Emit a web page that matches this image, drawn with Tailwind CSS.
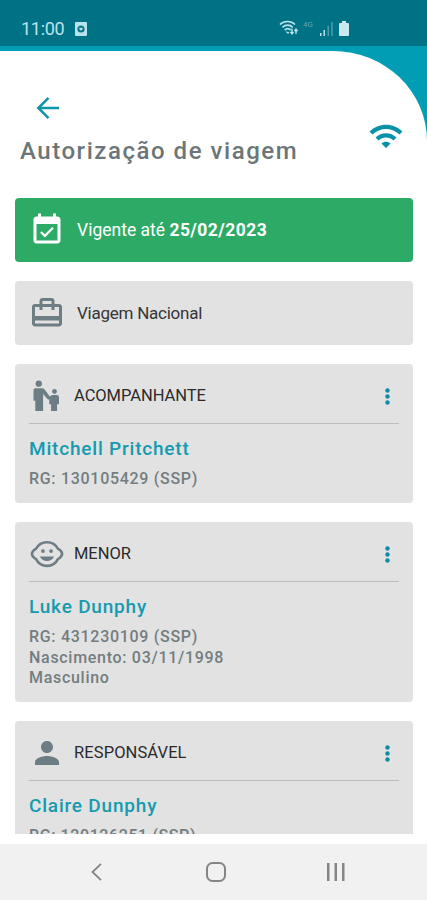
<!DOCTYPE html>
<html lang="pt-BR">
<head>
  <meta charset="UTF-8">
  <meta name="viewport" content="width=device-width, initial-scale=1.0">
  <title>Autorização de viagem</title>
  <script src="https://cdn.jsdelivr.net/npm/@tailwindcss/browser@4"></script>
</head>
<body class="h-[900px] w-[427px] overflow-hidden bg-[#009db5] font-['Roboto',sans-serif] flex flex-col">
  <!-- Status bar -->
  <div class="h-[46px] shrink-0 bg-[#007286] flex items-center pt-[11px] pl-[21px] text-[#b9e3ea]">
    <span class="text-[18px] leading-5 w-[43px] tracking-[-0.3px]">11:00</span>
    <svg class="ml-[11px] w-3 h-[14px]" viewBox="0 0 12 14">
      <rect width="12" height="14" rx="1" fill="#b9e3ea"/>
      <circle cx="6" cy="7" r="3.6" fill="#0c7487"/>
      <path d="M6 8.8L4.3 7V5.8h1.2l.5.5.5-.5h1.2V7z" fill="#b9e3ea"/>
    </svg>
    <svg class="ml-[192px] -mt-[2px] w-[19px] h-[16px]" viewBox="0 0 19 16" fill="none" stroke="#b9e3ea" stroke-width="1.7">
      <path d="M1 4.5c4-4 11-4 15 0M3.5 7.3c3-2.8 7.5-2.8 10.2 0M5.8 10c2-1.7 4-1.7 6 0"/>
      <path d="M6.5 11.500l2.500 2.500 1.500-2z" fill="#b9e3ea" stroke="none"/>
      <path d="M13 8.500v5M11.500 12l1.500 2 1.500-2M17 14V9.500M15.500 11L17 9l1.500 2" stroke-width="1.3"/>
    </svg>
    <span class="ml-[5px] -mt-2 w-[11px] text-[8px] leading-3 text-[#5fa9b6]">4G</span>
    <svg class="ml-[6px] w-[13px] h-[14px]" viewBox="0 0 13 14">
      <path d="M0 11h1.500v3H0zM3.500 8H5v6H3.500z" fill="#b9e3ea"/>
      <path d="M7.500 4H9v10H7.500zM11.200 0h1.500v14h-1.500z" fill="#4b9dac"/>
    </svg>
    <svg class="ml-[6px] w-[10px] h-[15px]" viewBox="0 0 10 15" fill="#c8eaef">
      <path d="M3 0h4v2h2a1 1 0 0 1 1 1v11a1 1 0 0 1-1 1H1a1 1 0 0 1-1-1V3a1 1 0 0 1 1-1h2z"/>
    </svg>
  </div>

  <main class="mt-[5px] h-[793px] shrink-0 bg-white rounded-tr-[94px_90px] flex flex-col">
    <!-- Header -->
    <header class="h-[147px] shrink-0 flex justify-between pl-[20px] pr-[23px]">
      <div class="pt-[45px]">
        <svg class="ml-4 w-6 h-6" viewBox="0 0 24 24" fill="none" stroke="#0d96ac" stroke-width="2.5">
          <path d="M23 12H3M12.500 1.800L2.300 12l10.200 10.200"/>
        </svg>
        <h1 class="mt-[15px] text-[24px] leading-8 font-medium tracking-[1.54px] text-[#6c7678] whitespace-nowrap">Autorização de viagem</h1>
      </div>
      <svg class="mt-[67px] w-9 h-9 shrink-0" viewBox="0 0 24 24" fill="#0991a8">
        <path d="M1 9l2 2c4.970-4.970 13.030-4.970 18 0l2-2C16.930 2.930 7.080 2.930 1 9zm8 8l3 3 3-3c-1.650-1.660-4.340-1.660-6 0zm-4-4l2 2c2.760-2.760 7.240-2.760 10 0l2-2C15.140 9.140 8.870 9.140 5 13z"/>
      </svg>
    </header>

    <!-- Cards -->
    <div class="h-[636px] shrink-0 overflow-hidden flex flex-col gap-[19px] pl-[15px] pr-[14px]">
      <section class="h-16 shrink-0 rounded bg-[#2dab66] flex items-center px-[14px] text-white">
        <svg class="w-9 h-9" viewBox="0 0 24 24" fill="currentColor">
          <path d="M16.530 11.060L15.470 10l-4.880 4.880-2.120-2.120-1.060 1.060L10.590 17l5.940-5.940zM19 3h-1V1h-2v2H8V1H6v2H5c-1.110 0-1.990.9-1.990 2L3 19c0 1.100.89 2 2 2h14c1.100 0 2-.9 2-2V5c0-1.100-.9-2-2-2zm0 16H5V8h14v11z"/>
        </svg>
        <p class="ml-3 text-[17.5px] leading-6">Vigente até <b class="font-bold tracking-[0.45px]">25/02/2023</b></p>
      </section>

      <section class="h-16 shrink-0 rounded bg-[#e2e2e2] flex items-center px-[14px] text-[#353535]">
        <svg class="w-9 h-9 text-[#6c7d84]" viewBox="0 0 24 24" fill="currentColor">
          <path d="M20 6h-3V4c0-1.110-.89-2-2-2H9c-1.110 0-2 .89-2 2v2H4c-1.110 0-2 .89-2 2v11c0 1.110.89 2 2 2h16c1.110 0 2-.89 2-2V8c0-1.110-.89-2-2-2zM9 4h6v2H9V4zm11 15H4v-2h16v2zm0-5H4V8h3v2h2V8h6v2h2V8h3v6z"/>
        </svg>
        <p class="ml-3 text-[17px] leading-6 tracking-[-0.25px]">Viagem Nacional</p>
      </section>

      <section class="h-[139px] shrink-0 rounded bg-[#e2e2e2] px-[14px]">
        <div class="h-[60px] pt-[5px] flex items-center border-b border-[#bdbdbd]">
          <svg class="w-9 h-9 text-[#6c7d84]" viewBox="0 0 24 24" fill="currentColor">
            <circle cx="6.5" cy="3.800" r="2.100"/>
            <circle cx="17" cy="9" r="1.600"/>
            <path d="M4.300 6.800h4.200c.8 0 1.400.3 1.900.9l3.500 4.600 1-.7c.3-.2.700-.3 1.100-.3h2.500c.9 0 1.500.6 1.500 1.500v4.700h-1.300V22h-4v-4.500h-1.200v-3.300c-.6.3-1 .1-1.400-.4L9.400 10.600V22H4.200v-6.800H3V8.300c0-.9.500-1.500 1.300-1.500z"/>
          </svg>
          <h2 class="ml-[9px] text-[16.5px] leading-6 tracking-[-0.05px] text-[#2b2b2b]">ACOMPANHANTE</h2>
          <svg class="ml-auto mr-[9px] w-[5px] h-[17px]" viewBox="0 0 5 17" fill="#0e8ca4">
            <circle cx="2.500" cy="2.500" r="2.200"/><circle cx="2.500" cy="8.500" r="2.200"/><circle cx="2.500" cy="14.500" r="2.200"/>
          </svg>
        </div>
        <h3 class="mt-[13px] text-[19px] leading-6 font-medium tracking-[0.8px] text-[#159ab0]">Mitchell Pritchett</h3>
        <p class="mt-[8px] text-[16px] leading-5 font-medium tracking-[0.7px] text-[#737d80]">RG: 130105429 (SSP)</p>
      </section>

      <section class="h-[180px] shrink-0 rounded bg-[#e2e2e2] px-[14px]">
        <div class="h-[60px] pt-[5px] flex items-center border-b border-[#bdbdbd]">
          <svg class="w-9 h-9 text-[#6c7d84]" viewBox="0 0 24 24" fill="currentColor">
            <path d="M12 4.100c3.100 0 5.900 1.700 7.300 4.400.8.300 1.500.9 2.100 1.700.9 1.200.9 2.300 0 3.500-.6.800-1.300 1.400-2.100 1.700-1.400 2.800-4.200 4.500-7.300 4.500s-5.900-1.700-7.300-4.500c-.8-.3-1.500-.9-2.100-1.700-.9-1.200-.9-2.300 0-3.500.6-.8 1.300-1.400 2.100-1.700C6.100 5.800 8.900 4.100 12 4.100z" fill="none" stroke="currentColor" stroke-width="1.700"/>
            <circle cx="14.700" cy="10" r="1.250"/><circle cx="9.300" cy="10" r="1.250"/>
            <path d="M7.300 13.600h9.400c-.7 1.900-2.600 3-4.700 3s-4-1.100-4.700-3z"/>
          </svg>
          <h2 class="ml-[9px] text-[16.5px] leading-6 tracking-[-0.05px] text-[#2b2b2b]">MENOR</h2>
          <svg class="ml-auto mr-[9px] w-[5px] h-[17px]" viewBox="0 0 5 17" fill="#0e8ca4">
            <circle cx="2.500" cy="2.500" r="2.200"/><circle cx="2.500" cy="8.500" r="2.200"/><circle cx="2.500" cy="14.500" r="2.200"/>
          </svg>
        </div>
        <h3 class="mt-[13px] text-[19px] leading-6 font-medium tracking-[0.8px] text-[#159ab0]">Luke Dunphy</h3>
        <div class="mt-[8px] text-[16px] leading-[20.5px] font-medium tracking-[0.7px] text-[#737d80]">
          <p>RG: 431230109 (SSP)</p>
          <p>Nascimento: 03/11/1998</p>
          <p>Masculino</p>
        </div>
      </section>

      <section class="h-[180px] shrink-0 rounded bg-[#e2e2e2] px-[14px]">
        <div class="h-[60px] pt-[5px] flex items-center border-b border-[#bdbdbd]">
          <svg class="w-9 h-9 text-[#6c7d84]" viewBox="0 0 24 24" fill="currentColor">
            <path d="M12 12c2.210 0 4-1.790 4-4s-1.790-4-4-4-4 1.790-4 4 1.790 4 4 4zm0 2c-2.670 0-8 1.340-8 4v2h16v-2c0-2.660-5.330-4-8-4z"/>
          </svg>
          <h2 class="ml-[9px] text-[16.5px] leading-6 tracking-[0.1px] text-[#2b2b2b]">RESPONSÁVEL</h2>
          <svg class="ml-auto mr-[9px] w-[5px] h-[17px]" viewBox="0 0 5 17" fill="#0e8ca4">
            <circle cx="2.500" cy="2.500" r="2.200"/><circle cx="2.500" cy="8.500" r="2.200"/><circle cx="2.500" cy="14.500" r="2.200"/>
          </svg>
        </div>
        <h3 class="mt-[13px] text-[19px] leading-6 font-medium tracking-[0.8px] text-[#159ab0]">Claire Dunphy</h3>
        <p class="mt-[8px] text-[16px] leading-5 font-medium tracking-[0.6px] text-[#737d80]">RG: 120126251 (SSP)</p>
      </section>
    </div>
  </main>

  <!-- Navigation bar -->
  <nav class="h-[56px] shrink-0 bg-[#f1f1f1] flex items-center pl-[91px] text-[#858585]">
    <svg class="w-[11px] h-[18px]" viewBox="0 0 11 18" fill="none" stroke="currentColor" stroke-width="1.8">
      <path d="M10 .8L1.500 9l8.500 8.200"/>
    </svg>
    <svg class="ml-[104px] w-5 h-5" viewBox="0 0 20 20" fill="none" stroke="currentColor" stroke-width="2">
      <rect x="1" y="1" width="18" height="18" rx="5.5"/>
    </svg>
    <svg class="ml-[101px] w-[18px] h-[18px]" viewBox="0 0 18 18" fill="currentColor">
      <path d="M0 0h2.500v18H0zM7.500 0H10v18H7.500zM15 0h2.500v18H15z"/>
    </svg>
  </nav>
</body>
</html>
